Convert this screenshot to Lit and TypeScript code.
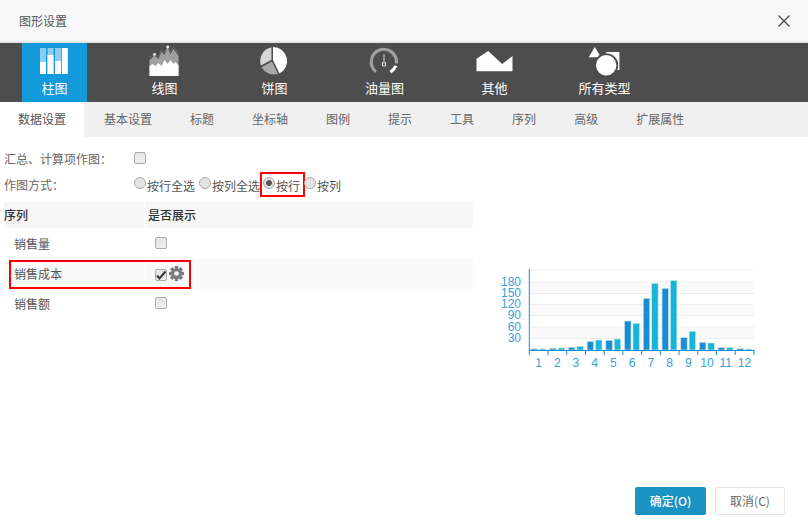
import { LitElement, html, css, svg } from "lit";
import { customElement } from "lit/decorators.js";

const icons = {
  bar: svg`<svg class="ic" width="65" height="36" viewBox="0 0 65 36">
    <g transform="translate(18,5)">
      <rect x="0" y="0" width="6" height="26" fill="#8ccdf0"/><rect x="0" y="14" width="6" height="12" fill="#fff"/>
      <rect x="7.5" y="0" width="6" height="26" fill="#8ccdf0"/><rect x="7.5" y="7" width="6" height="19" fill="#fff"/>
      <rect x="15" y="0" width="6" height="26" fill="#8ccdf0"/><rect x="15" y="13" width="6" height="13" fill="#fff"/>
      <rect x="21.8" y="0" width="6" height="26" fill="#fff"/>
    </g></svg>`,
  line: svg`<svg class="ic" width="65" height="36" viewBox="0 0 65 36">
    <g transform="translate(17.5,3)">
      <path d="M0 30V14L5 9.5 9 13 12 6 15 9 18 1.5 21 8 24 3 29 10V30Z" fill="#a0a0a0"/>
      <path d="M0 30V20L3 18 6 20 9 17 12 20 15 14 18 18 21 14 24 18 26 16 29 19V30Z" fill="#fff"/>
      <path d="M0 12L5 7 9 11 12 4 15 7 18 0 21 6 24 1 29 8" fill="none" stroke="#6e6e6e" stroke-width="1"/>
      <circle cx="5" cy="8.5" r="1.4" fill="#eee"/><circle cx="18.3" cy="1" r="1.4" fill="#eee"/>
    </g></svg>`,
  pie: svg`<svg class="ic" width="65" height="36" viewBox="0 0 65 36">
    <g transform="translate(32,18)">
      <path d="M-1 -14A14 14 0 0 1 5.5 12.5L-1 -1Z" fill="#fff"/>
      <path d="M-2.5 -1.2L-2.6 -13.8A14 14 0 0 0 -13 4.5Z" fill="#d6d6d6"/>
      <path d="M-2 .6L4 12.8A14 14 0 0 1 -12.5 6.2Z" fill="#a8a8a8"/>
    </g></svg>`,
  gauge: svg`<svg class="ic" width="65" height="36" viewBox="0 0 65 36">
    <g transform="translate(32,18.3)">
      <path d="M-8 10.5A12.6 12.6 0 1 1 12.4 2" fill="none" stroke="#a0a0a0" stroke-width="3.2"/>
      <path d="M11.8 4.5A12.6 12.6 0 0 1 6.5 10.8" fill="none" stroke="#fff" stroke-width="3.2"/>
      <path d="M0 -7V1" stroke="#c8c8c8" stroke-width="1.2"/>
      <rect x="-1.5" y="1.5" width="3" height="3" fill="none" stroke="#e0e0e0" stroke-width="1"/>
    </g></svg>`,
  other: svg`<svg class="ic" width="65" height="36" viewBox="0 0 65 36">
    <path d="M14.5 15.7L26.2 8 40.2 21 50.5 13V28.3H14.5Z" fill="#fff"/></svg>`,
  all: svg`<svg class="ic" width="65" height="36" viewBox="0 0 65 36">
    <path d="M16.8 14.2L22.8 4 28.8 14.2Z" fill="#fff"/>
    <rect x="34.2" y="9" width="13.2" height="18" fill="#fff"/>
    <circle cx="34.2" cy="22.3" r="12" fill="#4d4d4d"/>
    <circle cx="34.2" cy="22.3" r="10.2" fill="#fff"/></svg>`,
};

const gear = svg`<svg class="gear" width="15" height="15" viewBox="-8 -8 16 16">
  ${[0, 45, 90, 135].map(
    (a) => svg`<rect x="-1.8" y="-8" width="3.6" height="16" rx=".4" fill="#7a7a7a" transform="rotate(${a})"/>`
  )}
  <circle r="5.6" fill="#7a7a7a"/><circle r="2.5" fill="#fafafa"/></svg>`;

const A = [3.5, 5, 8, 26, 29, 87, 155, 185, 37, 23, 7, 4];
const B = [3.5, 6, 11, 30, 33, 80, 200, 208, 56, 21, 7, 3];
const X0 = 39.3;
const CW = 18.72;
const BASE = 90;

const chart = svg`<svg class="chart" width="280" height="120" viewBox="0 0 280 120">
  ${[22, 45, 67].map((y) => svg`<rect x="${X0}" y="${y}" width="225" height="${y === 45 ? 10.6 : 11.4}" fill="#fafafa"/>`)}
  ${[10, 22, 33.5, 44.5, 55.5, 67, 78.5].map(
    (y) => svg`<line x1="${X0}" x2="${X0 + 225}" y1="${y}" y2="${y}" stroke="#eeeeee"/>`
  )}
  ${A.map((h, i) => svg`<rect x="${X0 + CW * i + 1.7}" y="${BASE - h / 3}" width="6.4" height="${h / 3}" fill="#1a8dd0" stroke="#bfe0f3" stroke-width=".6"/>`)}
  ${B.map((h, i) => svg`<rect x="${X0 + CW * i + 10.1}" y="${BASE - h / 3}" width="6.4" height="${h / 3}" fill="#1ab3d8" stroke="#bfe8f3" stroke-width=".6"/>`)}
  <line x1="${X0}" x2="${X0}" y1="9" y2="90.5" stroke="#1a8dd0"/>
  <line x1="${X0}" x2="${X0 + 225.5}" y1="90.5" y2="90.5" stroke="#1a8dd0"/>
  ${Array.from({ length: 13 }, (_, i) => svg`<line x1="${X0 + CW * i}" x2="${X0 + CW * i}" y1="90" y2="95" stroke="#1a8dd0"/>`)}
  ${[[180, 25.5], [150, 37], [120, 48], [90, 59], [60, 70.5], [30, 82]].map(
    ([v, y]) => svg`<text class="lbl" x="31" y="${y}" text-anchor="end">${v}</text>`
  )}
  ${Array.from({ length: 12 }, (_, i) => svg`<text class="lbl" x="${X0 + CW * i + 9.2}" y="107" text-anchor="middle">${i + 1}</text>`)}
</svg>`;

@customElement("app-root")
export class AppRoot extends LitElement {
  static styles = css`
    :host {
      display: flex;
      flex-direction: column;
      width: 808px;
      height: 528px;
      background: #fff;
      font: 12px/1 "Noto Sans CJK SC", "Liberation Sans", sans-serif;
      color: #555;
      overflow: hidden;
    }
    .head {
      height: 41px;
      flex: none;
      display: flex;
      align-items: center;
      justify-content: space-between;
      padding: 0 17px 0 19px;
      background: #f8f8f8;
      border-bottom: 2px solid #e6e6e6;
    }
    .close { display: block; }
    .types {
      height: 59px;
      flex: none;
      display: flex;
      gap: 45px;
      padding-left: 22px;
      background: #4d4d4d;
    }
    .type {
      width: 65px;
      display: flex;
      flex-direction: column;
      align-items: center;
      color: #fff;
      font-size: 13px;
      white-space: nowrap;
    }
    .type.on { background: #129ada; }
    .ic { display: block; flex: none; margin-bottom: 2px; }
    .tabs {
      height: 35px;
      flex: none;
      display: flex;
      gap: 2px;
      background: #f0f0f0;
    }
    .tab {
      padding: 0 18px 2px;
      display: flex;
      align-items: center;
      color: #666;
    }
    .tab.on { background: #fff; color: #555; }
    .main { display: flex; flex: 1; }
    .left { width: 469px; margin-left: 4px; padding-top: 9px; }
    .form-row { display: flex; height: 26px; align-items: center; }
    .form-label { width: 130px; flex: none; color: #666; }
    input {
      appearance: none;
      margin: 0;
      flex: none;
      width: 10px;
      height: 10px;
      display: block;
      background: linear-gradient(#e6e6e6, #eeeeee);
      border: 1px solid #ababab;
      box-sizing: content-box;
    }
    input[type="checkbox"] { border-radius: 2px; }
    input[type="radio"] {
      border-radius: 50%;
      background: #e4e4e4;
      position: relative;
      top: -2px;
      margin-right: 1px;
    }
    input[type="radio"]:checked {
      background: radial-gradient(circle, #555 0 2.6px, #dedede 3.2px);
    }
    .cb-top { position: relative; top: -1px; }
    .radios { display: flex; align-items: center; }
    .radio { display: flex; align-items: center; margin-right: 4px; color: #555; }
    .radio span { position: relative; top: 1px; }
    .radio.mark { position: relative; margin: 0 4px 0 -1px; }
    .mark::after {
      content: "";
      position: absolute;
      left: -3px;
      right: -5px;
      top: -7px;
      height: 25px;
      border: 2px solid #f00;
      box-sizing: border-box;
    }
    .table { display: grid; grid-template-columns: 140px 328px; column-gap: 1px; margin-top: 4px; position: relative; }
    .th {
      height: 26px;
      background: #f6f6f6;
      display: flex;
      align-items: center;
      color: #333;
      font-weight: 500;
      margin-bottom: 1px;
    }
    .th.b { padding-left: 3px; }
    .td { height: 30px; display: flex; align-items: center; }
    .td.a { padding-left: 10px; }
    .td.b { padding-left: 10px; gap: 2px; }
    .td.hi { background: #fafafa; }
    .gear { display: block; position: relative; top: -1px; }
    .td input { position: relative; top: -1px; }
    .td.hi input { top: 1px; }
    .tick { position: absolute; left: 151px; top: 67px; pointer-events: none; }
    .row-mark {
      position: absolute;
      left: 5px;
      top: 58px;
      width: 182px;
      height: 29px;
      border: 2px solid #f00;
      box-sizing: border-box;
      pointer-events: none;
    }
    .chart-wrap { margin-left: 17px; padding-top: 123px; }
    .chart { display: block; }
    .lbl { font: 12px "Liberation Sans", sans-serif; fill: #35a0dd; }
    .btns {
      flex: none;
      display: flex;
      justify-content: flex-end;
      gap: 9px;
      padding: 0 23px 13px 0;
    }
    .btn {
      height: 28px;
      width: 71px;
      box-sizing: border-box;
      border-radius: 2px;
      display: flex;
      align-items: center;
      justify-content: center;
    }
    .btn.ok { background: #1b93c2; color: #fff; font-weight: 500; }
    .btn.no { width: 70px; background: #fff; color: #666; border: 1px solid #e4e4e4; }
  `;

  render() {
    const types: [string, unknown][] = [
      ["柱图", icons.bar], ["线图", icons.line], ["饼图", icons.pie],
      ["油量图", icons.gauge], ["其他", icons.other], ["所有类型", icons.all],
    ];
    const tabs = ["数据设置", "基本设置", "标题", "坐标轴", "图例", "提示", "工具", "序列", "高级", "扩展属性"];
    return html`
      <div class="head">
        <span>图形设置</span>
        <svg class="close" width="14" height="14" viewBox="0 0 14 14">
          <path d="M1.5 1.5L12.5 12.5M12.5 1.5L1.5 12.5" stroke="#444" stroke-width="1.2" fill="none"/>
        </svg>
      </div>
      <div class="types">
        ${types.map(([t, ic], i) => html`<div class="type ${i === 0 ? "on" : ""}">${ic}${t}</div>`)}
      </div>
      <div class="tabs">
        ${tabs.map((t, i) => html`<div class="tab ${i === 0 ? "on" : ""}">${t}</div>`)}
      </div>
      <div class="main">
        <div class="left">
          <div class="form-row">
            <div class="form-label">汇总、计算项作图：</div>
            <input class="cb-top" type="checkbox" />
          </div>
          <div class="form-row">
            <div class="form-label">作图方式：</div>
            <div class="radios">
              <label class="radio"><input type="radio" name="m" /><span>按行全选</span></label>
              <label class="radio"><input type="radio" name="m" /><span>按列全选</span></label>
              <label class="radio mark"><input type="radio" name="m" checked /><span>按行</span></label>
              <label class="radio"><input type="radio" name="m" /><span>按列</span></label>
            </div>
          </div>
          <div class="table">
            <div class="th">序列</div>
            <div class="th b">是否展示</div>
            <div class="td a">销售量</div>
            <div class="td b"><input type="checkbox" /></div>
            <div class="td a hi">销售成本</div>
            <div class="td b hi"><input type="checkbox" checked />${gear}</div>
            <div class="td a">销售额</div>
            <div class="td b"><input type="checkbox" /></div>
            <svg class="tick" width="12" height="12" viewBox="0 0 12 12">
              <path d="M2 6.5L4.5 9.5 10.5 2.5" fill="none" stroke="#333" stroke-width="2"/>
            </svg>
            <div class="row-mark"></div>
          </div>
        </div>
        <div class="chart-wrap">${chart}</div>
      </div>
      <div class="btns">
        <div class="btn ok">确定(O)</div>
        <div class="btn no">取消(C)</div>
      </div>
    `;
  }
}
